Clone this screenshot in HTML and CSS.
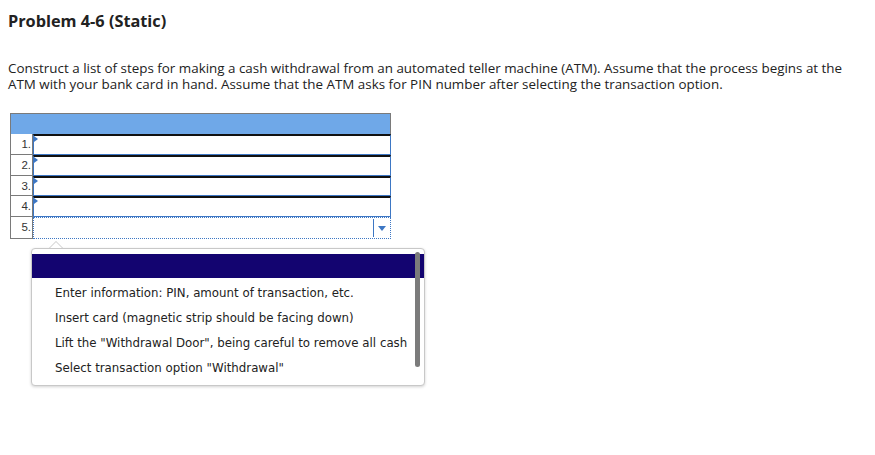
FILE: index.html
```html
<!DOCTYPE html>
<html>

<head>
    <title>Problem 4-6 (Static)</title>
    <meta charset="UTF-8">
    <link rel="stylesheet" href="styles.css">
</head>

<body>
    <div class="page">
        <h2 class="title">Problem 4-6 (Static)</h2>
        <p class="prompt">Construct a list of steps for making a cash withdrawal from an automated teller machine (ATM). Assume that the process begins at the ATM with your bank card in hand. Assume that the ATM asks for PIN number after selecting the transaction option.</p>

        <div class="question">
            <div class="steps">
                <div class="steps-head"></div>
                <div class="step">
                    <div class="num">1.</div>
                    <div class="cell"><span class="flag"></span></div>
                </div>
                <div class="step">
                    <div class="num">2.</div>
                    <div class="cell"><span class="flag"></span></div>
                </div>
                <div class="step">
                    <div class="num">3.</div>
                    <div class="cell"><span class="flag"></span></div>
                </div>
                <div class="step">
                    <div class="num">4.</div>
                    <div class="cell"><span class="flag"></span></div>
                </div>
                <div class="step last">
                    <div class="num">5.</div>
                    <div class="cell select">
                        <span class="arrow"></span>
                    </div>
                </div>
            </div>

            <div class="dropdown">
                <span class="notch"></span>
                <div class="option selected"></div>
                <div class="option">Enter information: PIN, amount of transaction, etc.</div>
                <div class="option">Insert card (magnetic strip should be facing down)</div>
                <div class="option">Lift the "Withdrawal Door", being careful to remove all cash</div>
                <div class="option">Select transaction option "Withdrawal"</div>
                <span class="scrollbar"></span>
            </div>
        </div>
    </div>
</body>

</html>
```

FILE: styles.css
```css
body {
    margin: 0;
    background-color: #fff;
    color: #222;
    font-family: "Open Sans", "Liberation Sans", sans-serif;
}

.page {
    padding: 0 8px;
}

.title {
    margin: 0;
    padding-top: 11px;
    font-size: 16.3px;
    line-height: 20px;
    font-weight: bold;
}

.prompt {
    margin: 30px 0 0 0;
    width: 850px;
    font-size: 13.4px;
    line-height: 15.5px;
}

.question {
    position: relative;
    margin: 21px 0 0 2px;
    height: 280px;
}

.steps {
    width: 380px;
    border-left: 1px solid #7a7a7a;
    border-top: 1px solid #7a7a7a;
}

.steps-head {
    height: 20px;
    background-color: #6fa8e8;
    border-right: 1px solid #7a7a7a;
}

.step {
    display: flex;
    height: 20.8px;
}

.step.last {
    height: 22px;
}

.num {
    width: 20px;
    padding-right: 1px;
    text-align: right;
    font-family: "Liberation Sans", sans-serif;
    font-size: 11.5px;
    line-height: 21px;
    color: #333;
    border-right: 1px solid #7a7a7a;
    border-bottom: 1px solid #7a7a7a;
}

.cell {
    position: relative;
    flex: 1;
    border: 1px solid #3d77c4;
    border-top: 2px solid #111;
}

.flag {
    position: absolute;
    left: 0;
    top: 0;
    width: 0;
    height: 0;
    border-top: 3px solid transparent;
    border-bottom: 3px solid transparent;
    border-left: 4px solid #3d77c4;
}

.cell.select {
    border: 1px dotted #3d77c4;
}

.arrow {
    position: absolute;
    right: 0;
    top: 1px;
    bottom: 1px;
    width: 16px;
    border-left: 1px solid #3d77c4;
}

.arrow::after {
    content: "";
    position: absolute;
    left: 4px;
    top: 7px;
    border-left: 4px solid transparent;
    border-right: 4px solid transparent;
    border-top: 5px solid #3d77c4;
}

.dropdown {
    position: absolute;
    z-index: 5;
    left: 21px;
    top: 135px;
    width: 392px;
    padding: 5px 0 7px 0;
    background-color: #fff;
    border: 1px solid #c8c8c8;
    border-radius: 4px;
    box-shadow: 0 1px 3px rgba(0, 0, 0, 0.18);
    font-family: "DejaVu Sans", Verdana, sans-serif;
    font-size: 11.8px;
    color: #222;
}

/* little pointer above the popup, grey edge with a white fill */
.notch {
    position: absolute;
    left: 17px;
    top: -8px;
    width: 0;
    height: 0;
    border-left: 7px solid transparent;
    border-right: 7px solid transparent;
    border-bottom: 7px solid #c8c8c8;
}

.notch::after {
    content: "";
    position: absolute;
    left: -6px;
    top: 1px;
    border-left: 6px solid transparent;
    border-right: 6px solid transparent;
    border-bottom: 6px solid #fff;
}

.option {
    height: 25px;
    line-height: 31px;
    padding-left: 23px;
    white-space: nowrap;
}

.option.selected {
    height: 24px;
    background-color: #130470;
}

.scrollbar {
    position: absolute;
    right: 4px;
    top: 3px;
    width: 5px;
    height: 115px;
    border-radius: 3px;
    background-color: #7b7b7b;
}
```
